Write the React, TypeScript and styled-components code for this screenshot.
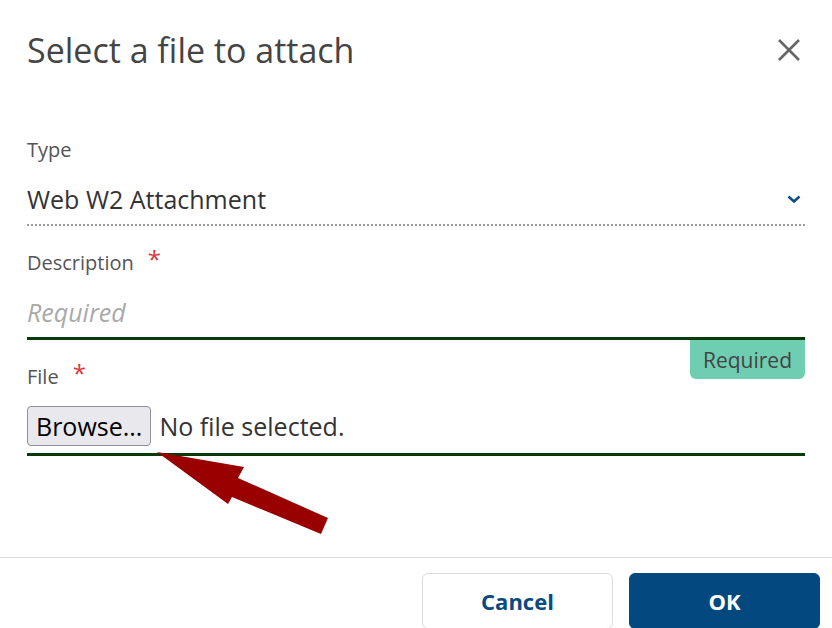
import React from 'react'
import styled, { createGlobalStyle } from 'styled-components'

const GlobalStyle = createGlobalStyle`
  html, body {
    margin: 0;
    padding: 0;
    background: #fff;
  }
  body {
    font-family: 'Open Sans', 'Liberation Sans', sans-serif;
  }
`

const Dialog = styled.div`
  position: relative;
  width: 832px;
  height: 628px;
  display: flex;
  flex-direction: column;
  overflow: hidden;
  background: #fff;
`

const Header = styled.div`
  height: 100px;
  display: flex;
  align-items: center;
  justify-content: space-between;
  padding: 0 30px 0 27px;
`

const Title = styled.h1`
  margin: 0;
  font-size: 34px;
  font-weight: 400;
  line-height: 1;
  color: #444;
`

const CloseButton = styled.button`
  border: 0;
  background: none;
  padding: 0;
  width: 26px;
  height: 26px;
  display: flex;
  align-items: center;
  justify-content: center;
  cursor: pointer;
`

const Body = styled.div`
  flex: 1;
  padding: 0 27px;
  display: flex;
  flex-direction: column;
`

const Field = styled.div<{ $top: number }>`
  position: relative;
  margin-top: ${p => p.$top}px;
`

const Label = styled.div`
  display: flex;
  align-items: flex-start;
  gap: 14px;
  font-size: 20px;
  line-height: 28px;
  color: #555;
`

const Star = styled.span`
  color: #d9363e;
  font-size: 24px;
  line-height: 20px;
`

const SelectRow = styled.div`
  display: flex;
  align-items: center;
  justify-content: space-between;
  padding: 18px 4px 8px 0;
  border-bottom: 2px dotted #9a9a9a;
  font-size: 25px;
  line-height: 34px;
  color: #333;
`

const InputRow = styled.div<{ $padTop: number; $padBottom: number }>`
  display: flex;
  align-items: center;
  gap: 8px;
  padding: ${p => p.$padTop}px 0 ${p => p.$padBottom}px;
  border-bottom: 3px solid #0a3a0a;
  font-size: 25px;
  line-height: 34px;
`

const Placeholder = styled.span`
  font-style: italic;
  color: #a9a9a9;
`

const Badge = styled.div`
  position: absolute;
  top: 100%;
  right: 0;
  width: 115px;
  height: 39px;
  display: flex;
  align-items: center;
  justify-content: center;
  background: #6fcdb2;
  border-radius: 0 0 6px 6px;
  font-size: 21px;
  color: #444;
`

const BrowseButton = styled.button`
  height: 40px;
  padding: 0 8px;
  background: #e9e9ed;
  border: 1px solid #8f8f9d;
  border-radius: 4px;
  font-family: 'Open Sans', 'Liberation Sans', sans-serif;
  font-size: 25px;
  color: #000;
  cursor: pointer;
`

const FileName = styled.span`
  color: #333;
`

const Footer = styled.div`
  display: flex;
  justify-content: flex-end;
  gap: 16px;
  padding: 15px 12px 0;
  height: 55px;
  border-top: 1px solid #dcdcdc;
`

const Button = styled.button<{ $primary?: boolean }>`
  width: 191px;
  height: 56px;
  border-radius: 6px;
  border: 1px solid ${p => (p.$primary ? '#03497f' : '#dcdcdc')};
  background: ${p => (p.$primary ? '#03497f' : '#fff')};
  color: ${p => (p.$primary ? '#fff' : '#0a4a80')};
  font-family: 'Open Sans', 'Liberation Sans', sans-serif;
  font-size: 22px;
  font-weight: 700;
  cursor: pointer;
`

const Overlay = styled.svg`
  position: absolute;
  top: 0;
  left: 0;
  pointer-events: none;
`

export default function App() {
  return (
    <>
      <GlobalStyle />
      <Dialog>
        <Header>
          <Title>Select a file to attach</Title>
          <CloseButton aria-label="Close">
            <svg width="24" height="24" viewBox="0 0 24 24">
              <path d="M2 2 L22 22 M22 2 L2 22" stroke="#666" strokeWidth="2.6" />
            </svg>
          </CloseButton>
        </Header>

        <Body>
          <Field $top={36}>
            <Label>Type</Label>
            <SelectRow>
              <span>Web W2 Attachment</span>
              <svg width="14" height="8" viewBox="0 0 14 8">
                <path d="M1.5 1.5 L7 6.5 L12.5 1.5" fill="none" stroke="#0f4c81" strokeWidth="2.5" />
              </svg>
            </SelectRow>
          </Field>

          <Field $top={23}>
            <Label>
              Description <Star>*</Star>
            </Label>
            <InputRow $padTop={18} $padBottom={8}>
              <Placeholder>Required</Placeholder>
            </InputRow>
            <Badge>Required</Badge>
          </Field>

          <Field $top={23}>
            <Label>
              File <Star>*</Star>
            </Label>
            <InputRow $padTop={15} $padBottom={7}>
              <BrowseButton>Browse...</BrowseButton>
              <FileName>No file selected.</FileName>
            </InputRow>
          </Field>
        </Body>

        <Footer>
          <Button>Cancel</Button>
          <Button $primary>OK</Button>
        </Footer>

        <Overlay width="832" height="628" viewBox="0 0 832 628">
          <polygon
            points="157,452 244,467 238,478 328,518 321,534 232,497 228,504"
            fill="#990000"
          />
        </Overlay>
      </Dialog>
    </>
  )
}
